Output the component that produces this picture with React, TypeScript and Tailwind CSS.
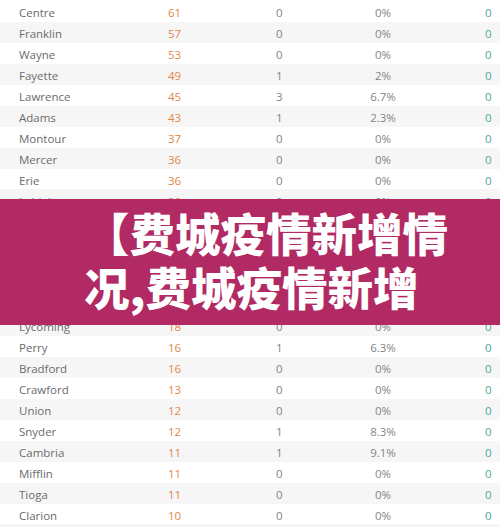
type Row = { name: string; cases: number; deaths: number; rate: string; recovered: number };

const rows: Row[] = [
  { name: "Centre", cases: 61, deaths: 0, rate: "0%", recovered: 0 },
  { name: "Franklin", cases: 57, deaths: 0, rate: "0%", recovered: 0 },
  { name: "Wayne", cases: 53, deaths: 0, rate: "0%", recovered: 0 },
  { name: "Fayette", cases: 49, deaths: 1, rate: "2%", recovered: 0 },
  { name: "Lawrence", cases: 45, deaths: 3, rate: "6.7%", recovered: 0 },
  { name: "Adams", cases: 43, deaths: 1, rate: "2.3%", recovered: 0 },
  { name: "Montour", cases: 37, deaths: 0, rate: "0%", recovered: 0 },
  { name: "Mercer", cases: 36, deaths: 0, rate: "0%", recovered: 0 },
  { name: "Erie", cases: 36, deaths: 0, rate: "0%", recovered: 0 },
  { name: "Lehigh", cases: 30, deaths: 0, rate: "0%", recovered: 0 },
  { name: "Blair", cases: 27, deaths: 0, rate: "0%", recovered: 0 },
  { name: "Lebanon", cases: 25, deaths: 0, rate: "0%", recovered: 0 },
  { name: "Columbia", cases: 23, deaths: 0, rate: "0%", recovered: 0 },
  { name: "Clinton", cases: 21, deaths: 0, rate: "0%", recovered: 0 },
  { name: "Indiana", cases: 19, deaths: 0, rate: "0%", recovered: 0 },
  { name: "Lycoming", cases: 18, deaths: 0, rate: "0%", recovered: 0 },
  { name: "Perry", cases: 16, deaths: 1, rate: "6.3%", recovered: 0 },
  { name: "Bradford", cases: 16, deaths: 0, rate: "0%", recovered: 0 },
  { name: "Crawford", cases: 13, deaths: 0, rate: "0%", recovered: 0 },
  { name: "Union", cases: 12, deaths: 0, rate: "0%", recovered: 0 },
  { name: "Snyder", cases: 12, deaths: 1, rate: "8.3%", recovered: 0 },
  { name: "Cambria", cases: 11, deaths: 1, rate: "9.1%", recovered: 0 },
  { name: "Mifflin", cases: 11, deaths: 0, rate: "0%", recovered: 0 },
  { name: "Tioga", cases: 11, deaths: 0, rate: "0%", recovered: 0 },
  { name: "Clarion", cases: 10, deaths: 0, rate: "0%", recovered: 0 },
  { name: "Greene", cases: 9, deaths: 0, rate: "0%", recovered: 0 },
];

export default function App() {
  return (
    <div className="relative h-[527px] w-[500px] overflow-hidden bg-white pt-px font-['Open_Sans',sans-serif] text-[11.5px] text-[#6b6b6b]">
      {rows.map((r, i) => (
        <div
          key={r.name}
          className={`grid h-[20.95px] grid-cols-[149px_107px_60px_96px_1fr] items-center pl-[19px] pt-[3px] ${
            i % 2 === 1 ? "bg-[#f6f6f6]" : "bg-white"
          }`}
        >
          <span>{r.name}</span>
          <span className="text-[#e0874a]">{r.cases}</span>
          <span className="pl-px text-[#858585]">{r.deaths}</span>
          <span className="text-center text-[#858585]">{r.rate}</span>
          <span className="pl-[54px] text-[#4ea79c]">{r.recovered}</span>
        </div>
      ))}

      <div className="absolute left-0 top-[199px] h-[126px] w-full bg-[#b12a63] pl-[84px] pr-[30px] pt-[6px]">
        <h1 className="font-['Noto_Sans_CJK_SC',sans-serif] text-[45.5px] font-black leading-[54px] text-white">
          【费城疫情新增情况,费城疫情新增
        </h1>
      </div>
    </div>
  );
}
